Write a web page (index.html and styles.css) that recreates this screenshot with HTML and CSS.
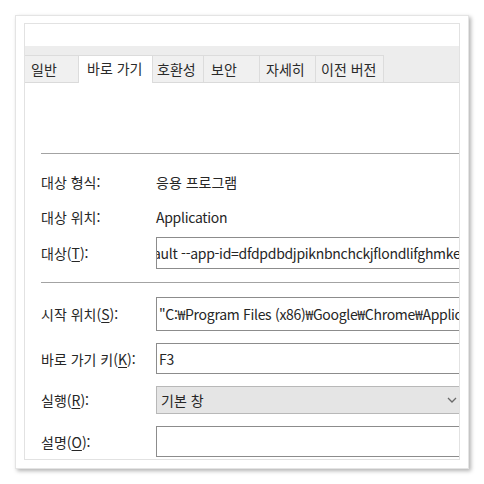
FILE: index.html
```html
<!DOCTYPE html>
<html lang="ko">
<head>
<meta charset="utf-8">
<title>바로 가기 속성</title>
<link rel="stylesheet" href="styles.css">
</head>
<body>
<div class="card">
  <div class="panel">
    <div class="top-space"></div>
    <div class="tabstrip">
      <div class="tab t-general">일반</div>
      <div class="tab t-shortcut active">바로 가기</div>
      <div class="tab t-compat">호환성</div>
      <div class="tab t-security">보안</div>
      <div class="tab t-details">자세히</div>
      <div class="tab t-prev">이전 버전</div>
    </div>
    <div class="head-space"></div>
    <div class="sep"></div>
    <div class="group1">
      <div class="row row-text">
        <div class="label">대상 형식:</div>
        <div class="value">응용 프로그램</div>
      </div>
      <div class="row row-text">
        <div class="label">대상 위치:</div>
        <div class="value latin">Application</div>
      </div>
      <div class="row row-target">
        <div class="label">대상(<u>T</u>):</div>
        <div class="ctl h-target latin"><span class="target-text">ault --app-id=dfdpdbdjpiknbnchckjflondlifghmke</span></div>
      </div>
    </div>
    <div class="sep"></div>
    <div class="group2">
      <div class="row">
        <div class="label">시작 위치(<u>S</u>):</div>
        <div class="ctl h-start latin">"C:₩Program Files (x86)₩Google₩Chrome₩Application"</div>
      </div>
      <div class="row">
        <div class="label">바로 가기 키(<u>K</u>):</div>
        <div class="ctl h-key latin">F3</div>
      </div>
      <div class="row">
        <div class="label">실행(<u>R</u>):</div>
        <div class="ctl select h-run">
          <span class="sel-text">기본 창</span>
          <svg class="chev" width="10" height="6" viewBox="0 0 10 6"><path d="M1 1 L5 5 L9 1" fill="none" stroke="#6a6a6a" stroke-width="1.3"/></svg>
        </div>
      </div>
      <div class="row">
        <div class="label">설명(<u>O</u>):</div>
        <div class="ctl h-desc"></div>
      </div>
    </div>
  </div>
</div>
</body>
</html>
```

FILE: styles.css
```css
* { box-sizing: border-box; }
html, body {
  margin: 0;
  padding: 0;
  background: #ffffff;
  width: 484px;
  height: 484px;
  overflow: hidden;
}
body {
  font-family: "Noto Sans CJK KR", "Noto Sans", sans-serif;
  font-size: 14px;
  color: #262626;
}
.card {
  margin: 15px 0 0 15px;
  width: 454px;
  height: 454px;
  border: 1px solid #e4e4e4;
  background: #ffffff;
  padding: 7px 8px;
  box-shadow: 2px 2px 4px rgba(0, 0, 0, 0.3);
}
.panel {
  width: 436px;
  height: 437px;
  border: 1px solid #e2e2e2;
  overflow: hidden;
  background: #ffffff;
}
.top-space { height: 22px; }
.tabstrip {
  height: 37px;
  background: #ededed;
  border-bottom: 1px solid #dadada;
  display: flex;
  align-items: flex-end;
}
.tab {
  height: 27px;
  background: #f0f0f0;
  border: 1px solid #dcdcdc;
  border-bottom: none;
  border-left: none;
  line-height: 26px;
  white-space: nowrap;
  color: #2a2a2a;
}
.tab.active {
  background: #ffffff;
  height: 28px;
  margin-bottom: -1px;
  line-height: 24px;
  border-left: 1px solid #dcdcdc;
}
.t-general { width: 53px; padding-left: 6px; border-right: none; }
.t-shortcut { width: 75px; padding-left: 8px; }
.t-compat { width: 51px; padding-left: 4px; }
.t-security { width: 56px; padding-left: 7px; }
.t-details { width: 56px; padding-left: 6px; }
.t-prev { width: 68px; padding-left: 5px; }
.head-space { height: 70px; }
.sep {
  height: 1px;
  background: #a3a3a3;
  margin-left: 16px;
}
.group1 {
  padding: 10px 0 13px 16px;
  display: flex;
  flex-direction: column;
}
.group2 {
  padding: 14px 0 0 16px;
  display: flex;
  flex-direction: column;
  gap: 12px;
}
.row {
  display: flex;
  align-items: center;
}
.row-text { height: 35px; }
.row-target { margin-top: 3px; }
.label {
  width: 115px;
  flex: none;
  white-space: nowrap;
}
.label u { text-underline-offset: 2px; }
.value { white-space: nowrap; }
.latin { letter-spacing: -0.3px; }
.ctl {
  flex: 1;
  margin-right: -6px;
  border: 1px solid #8c8c8c;
  background: #ffffff;
  display: flex;
  align-items: center;
  padding: 0 2px;
  overflow: hidden;
  white-space: nowrap;
}
.h-target {
  height: 32px;
  padding-left: 0;
}
.target-text { flex: none; margin-left: -4px; }
.h-start { height: 34px; }
.h-key { height: 31px; }
.h-run { height: 28px; }
.h-desc { height: 31px; }
.select {
  background: #e5e5e5;
  border-color: #b8b8b8;
  padding: 0 7px 0 4px;
  justify-content: space-between;
}
.chev { flex: none; }
```
